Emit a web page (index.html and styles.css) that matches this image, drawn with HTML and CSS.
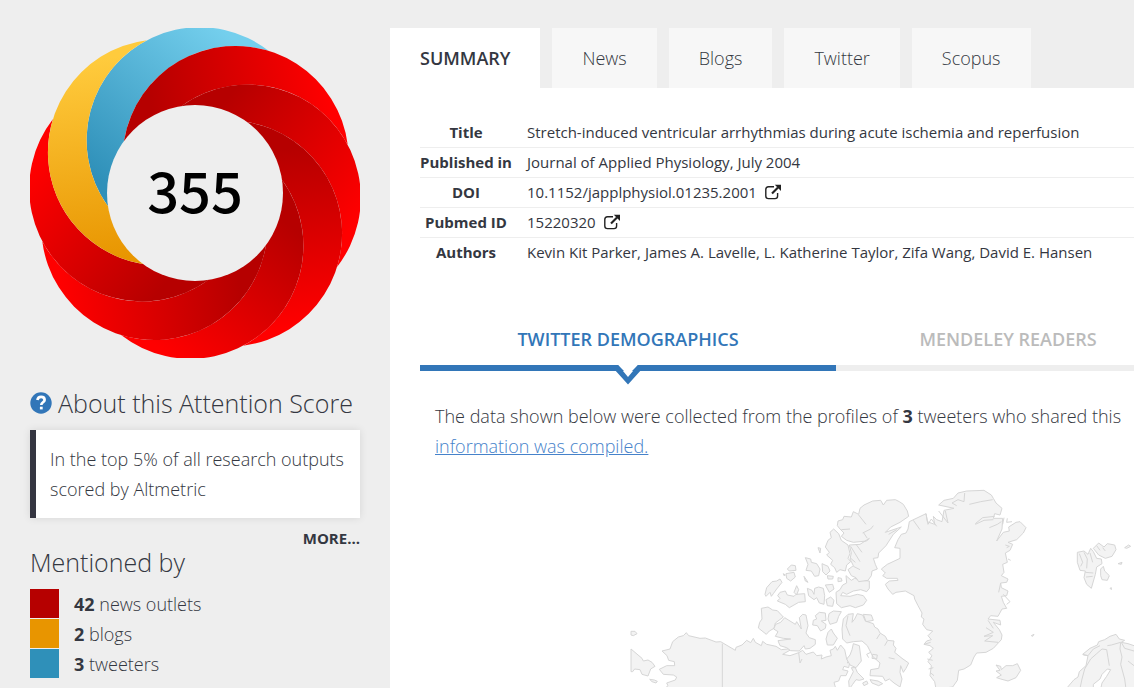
FILE: index.html
```html
<!DOCTYPE html>
<html lang="en">
    <head>
        <meta charset="UTF-8" />
        <meta name="viewport" content="width=device-width, initial-scale=1.0" />
        <title>Altmetric - Stretch-induced ventricular arrhythmias</title>
        <link rel="stylesheet" href="styles.css">
    </head>
    <body>
        <div class="page">
            <aside class="sidebar">
                <svg class="donut" viewBox="-165 -165 330 330" role="img" aria-label="Attention score 355">
                    <defs>
                        <linearGradient id="red" gradientUnits="userSpaceOnUse" x1="-75" y1="-10" x2="20" y2="-160">
                            <stop offset="0" stop-color="#b60000" />
                            <stop offset="1" stop-color="#ff0000" />
                        </linearGradient>
                        <linearGradient id="yellow" gradientUnits="userSpaceOnUse" x1="-90" y1="10" x2="20" y2="-160">
                            <stop offset="0" stop-color="#e89500" />
                            <stop offset="1" stop-color="#ffcb3d" />
                        </linearGradient>
                        <linearGradient id="blue" gradientUnits="userSpaceOnUse" x1="-90" y1="0" x2="20" y2="-160">
                            <stop offset="0" stop-color="#2f90b9" />
                            <stop offset="1" stop-color="#74cfed" />
                        </linearGradient>
                        <path id="petal" d="M61.28 -147.94A113 113 0 1 0 -23.8 57.46A113 113 0 0 1 61.28 -147.94Z" />
                    </defs>
                    <g transform="rotate(5)">
                        <use href="#petal" fill="url(#blue)" />
                        <use href="#petal" fill="url(#red)" transform="rotate(45)" />
                        <use href="#petal" fill="url(#red)" transform="rotate(90)" />
                        <use href="#petal" fill="url(#red)" transform="rotate(135)" />
                        <use href="#petal" fill="url(#red)" transform="rotate(180)" />
                        <use href="#petal" fill="url(#red)" transform="rotate(225)" />
                        <use href="#petal" fill="url(#red)" transform="rotate(270)" />
                        <use href="#petal" fill="url(#yellow)" transform="rotate(315)" />
                    </g>
                    <circle r="88" fill="#eeeeee" />
                    <text class="score" y="20" text-anchor="middle">355</text>
                </svg>

                <h2 class="about">
                    <svg class="help" viewBox="0 0 22 22" aria-hidden="true">
                        <circle cx="11" cy="11" r="10.7" fill="#3276b8" />
                        <path d="M7.4 8.1C7.8 5.9 9.2 4.9 11.1 4.9C13.3 4.9 14.6 6.2 14.6 8C14.6 10.3 11.3 10.3 11.3 13" fill="none" stroke="#fff" stroke-width="2.7" />
                        <path d="M9.9 14.7h2.8v2.7h-2.8z" fill="#fff" />
                    </svg>
                    About this Attention Score
                </h2>
                <div class="score-box">In the top 5% of all research outputs scored by Altmetric</div>
                <a class="more" href="#">MORE...</a>

                <h2 class="mentioned">Mentioned by</h2>
                <ul class="mentions">
                    <li class="news"><a href="#"><strong>42</strong> news outlets</a></li>
                    <li class="blogs"><a href="#"><strong>2</strong> blogs</a></li>
                    <li class="tweeters"><a href="#"><strong>3</strong> tweeters</a></li>
                </ul>
            </aside>

            <main class="content">
                <nav class="tabs">
                    <a class="active" href="#">SUMMARY</a>
                    <a href="#">News</a>
                    <a href="#">Blogs</a>
                    <a href="#">Twitter</a>
                    <a href="#">Scopus</a>
                </nav>

                <div class="panel">
                    <table class="details">
                        <tr>
                            <th scope="row">Title</th>
                            <td>Stretch-induced ventricular arrhythmias during acute ischemia and reperfusion</td>
                        </tr>
                        <tr>
                            <th scope="row">Published in</th>
                            <td>Journal of Applied Physiology, July 2004</td>
                        </tr>
                        <tr>
                            <th scope="row">DOI</th>
                            <td>
                                <a href="#">10.1152/japplphysiol.01235.2001
                                    <svg class="ext" viewBox="0 0 16 16" aria-hidden="true">
                                        <path d="M9 2.7H3.5Q.8 2.7 .8 5.4V12Q.8 14.6 3.5 14.6H10Q12.6 14.6 12.6 12V9" fill="none" stroke="#222" stroke-width="1.4" />
                                        <path d="M7 9.5L13 3.5" stroke="#222" stroke-width="2.2" />
                                        <path d="M9.8 .7H16V7z" fill="#222" />
                                    </svg></a>
                            </td>
                        </tr>
                        <tr>
                            <th scope="row">Pubmed ID</th>
                            <td>
                                <a href="#">15220320
                                    <svg class="ext" viewBox="0 0 16 16" aria-hidden="true">
                                        <path d="M9 2.7H3.5Q.8 2.7 .8 5.4V12Q.8 14.6 3.5 14.6H10Q12.6 14.6 12.6 12V9" fill="none" stroke="#222" stroke-width="1.4" />
                                        <path d="M7 9.5L13 3.5" stroke="#222" stroke-width="2.2" />
                                        <path d="M9.8 .7H16V7z" fill="#222" />
                                    </svg></a>
                            </td>
                        </tr>
                        <tr>
                            <th scope="row">Authors</th>
                            <td>Kevin Kit Parker, James A. Lavelle, L. Katherine Taylor, Zifa Wang, David E. Hansen</td>
                        </tr>
                    </table>

                    <div class="subtabs">
                        <a class="active" href="#">TWITTER DEMOGRAPHICS
                            <svg class="arrow" viewBox="0 0 28 20" aria-hidden="true">
                                <path d="M4 0H24L14 10z" fill="#fff" />
                                <path d="M0 0H4L14 12L24 0H28V4L14 19.5L0 4z" fill="#3276b8" />
                            </svg></a>
                        <a href="#">MENDELEY READERS</a>
                    </div>

                    <p class="intro">
                        The data shown below were collected from the profiles of <strong>3</strong> tweeters who shared this<br>
                        <a href="#">information was compiled.</a>
                    </p>

                    <svg class="map" viewBox="30 30 1512 594" role="img" aria-label="World map">
                        <!-- Alaska and northern Canada -->
                        <path d="M33 510L66 538L70 546L84 543L96 550L105 562L92 570L84 591L66 586L60 572L44 570L38 578L33 578zM33 457L45 457L51 464L40 470L33 468zM89 601L103 603L112 607L108 612L96 608z" />
                        <path d="M133 630L144 620L140 612L166 603L170 594L160 588L130 586L118 571L140 560L164 560L163 548L146 544L141 530L126 516L150 510L158 488L175 474L190 470L199 461L206 470L240 478L256 477L288 489L302 488L346 514L348 505L366 498L380 484L392 491L400 478L406 490L424 500L428 487L440 496L468 502L484 512L520 508L488 526L510 530L536 521L548 514L558 526L580 519L590 530L606 528L604 540L618 534L634 530L630 514L640 510L646 502L652 514L662 498L674 512L680 540L690 538L682 552L690 548L686 566L672 562L668 572L684 576L678 590L662 590L656 606L642 610L646 624L640 632z" />
                        <path d="M307 494V630M536 521L540 552L546 540" fill="none" />
                        <path d="M424 388L444 384L458 393L472 395L490 414L466 432L462 448L448 456L439 466L415 447L419 430L426 420z" />
                        <path d="M494 416L482 430L467 436L461 450L474 458L466 472L490 478L512 480L474 485L480 500L500 506L512 515L538 516L552 500L556 510L570 508L586 496L586 482L568 476L558 462L564 440L558 408L548 406L538 416L544 450L530 428L526 436L510 426z" />
                        <!-- Arctic islands -->
                        <path d="M435 346L440 326L456 308L470 306L480 300L486 310L470 330L460 344L454 352L450 340L438 352zM473 350L480 340L496 336L502 348L522 352L528 346L554 344L556 368L536 370L508 386L496 376L472 366L480 358zM522 340L530 320L536 332L530 348z" />
                        <path d="M502 270L514 258L526 260L528 274L508 276zM498 284L522 280L526 294L512 306L500 298zM490 284L496 288L492 290zM556 236L572 240L574 250L590 254L600 270L596 290L584 292L574 276L558 274L564 256zM606 254L624 262L630 276L618 288L608 278zM594 206L602 208L600 222zM552 292L564 310L556 306zM622 290L640 292L638 300L624 300zM654 296L664 298L666 306L654 308z" />
                        <path d="M562 328L576 334L582 346L584 328L596 324L610 328L614 350L612 376L598 372L590 356L582 362L566 350zM616 318L638 316L642 330L628 340zM618 362L632 354L642 364L638 382L622 380zM586 410L598 400L616 402L618 424L604 426L618 436L616 448L602 456L592 440L578 438L580 424L590 420zM627 404L640 396L664 398L656 412L650 430L630 436L624 420zM624 460L634 450L640 462L652 478L640 498L622 498L618 480z" />
                        <path d="M648 340L660 332L668 318L680 312L678 290L694 304L704 298L724 304L748 306L748 328L740 338L722 332L700 336L680 346L668 340L662 350L690 352L712 346L730 350L740 364L730 378L706 386L690 380L664 386L650 374z" />
                        <path d="M641 150L656 164L664 184L684 198L690 224L684 238L692 248L680 258L676 276L660 272L650 280L644 266L632 256L638 244L620 228L628 220L616 204L624 184L634 176L630 160z" />
                        <path d="M652 140L654 126L668 122L672 112L694 114L700 98L716 106L720 88L732 78L758 66L782 64L790 78L800 64L826 62L838 68L850 76L862 96L866 112L840 130L812 144L796 160L844 144L820 166L798 200L776 222L774 236L760 238L766 256L772 270L756 276L754 290L744 304L716 308L708 296L694 290L684 272L700 260L690 240L694 222L688 198L720 196L748 178L740 186L720 188L700 190L680 184L664 172L672 162L660 150z" />
                        <path d="M692 202L720 248M708 196L726 220M716 108L738 136M728 162L752 150L760 140M690 236L706 250M742 178L730 160M690 150L664 152M806 166L830 152M700 262L720 272" fill="none" />
                        <!-- Baffin -->
                        <path d="M666 450L670 420L684 406L700 404L696 430L704 420L712 404L728 408L736 426L760 434L764 444L774 450L780 462L796 472L802 484L822 486L820 498L828 508L824 520L846 538L866 552L858 568L850 580L842 560L840 580L846 600L840 624L822 612L808 600L796 606L788 592L750 590L752 572L776 568L780 552L758 532L742 500L726 486L700 488L680 492L668 480zM730 406L754 408L760 424L738 428zM688 630L686 606L700 578L694 566L706 566L712 580L732 600L718 604L708 602L698 616zM700 494L718 500L724 546L708 566L690 558L680 540L690 528L696 512zM758 526L772 528L770 540L756 538z" />
                        <path d="M728 612L740 606L744 614L732 620zM750 602L774 606L788 614L776 620L756 612z" />
                        <path d="M684 410L678 440L690 470M752 520L740 526L746 536M824 540L806 536M802 486L794 500M780 464L770 480" fill="none" />
                        <!-- Greenland -->
                        <path d="M948 630L944 608L930 590L934 560L924 548L936 530L926 520L940 508L930 500L912 496L920 486L934 482L924 470L938 456L920 452L908 436L912 420L904 414L906 402L894 380L884 360L882 350L856 336L828 340L818 346L804 330L796 316L808 306L834 304L832 298L800 298L788 290L796 282L784 270L802 256L840 238L840 208L824 206L834 182L844 166L858 162L864 150L868 128L918 104L922 128L944 136L940 112L950 122L966 128L972 94L1002 88L984 84L956 78L972 64L1000 58L1014 42L1040 36L1092 34L1114 48L1120 58L1128 72L1146 88L1140 108L1124 104L1120 118L1148 118L1146 150L1130 186L1150 160L1168 156L1166 144L1188 130L1200 128L1218 146L1210 162L1190 182L1164 190L1178 196L1170 214L1156 222L1162 250L1148 256L1152 280L1144 290L1164 300L1160 310L1142 312L1144 326L1164 336L1160 350L1144 352L1150 370L1160 388L1146 390L1134 412L1112 410L1104 420L1140 424L1142 438L1120 430L1138 452L1146 468L1144 482L1120 508L1098 520L1070 522L1062 534L1052 558L1032 570L1016 574L1012 604L998 624z" />
                        <path d="M880 124L900 152M918 104L924 136L934 120L950 142M956 96L984 132L976 96M1034 42L1032 68L1014 62L996 72L1010 80M1048 76L1082 68L1118 62M1066 134L1088 116L1124 112M1066 136L1092 124L1120 122M1108 146L1132 136L1144 128M1152 116L1148 136M1162 118L1160 130L1176 128M1156 198L1168 202L1160 206M1164 240L1172 244M1142 312L1136 340M1150 346L1170 368L1160 376M1104 424L1120 448M1098 446L1120 460L1092 472L1118 470L1094 486L1134 490M912 496L932 490M922 540L938 544M926 570L940 566M930 580L942 590" fill="none" />
                        <!-- Iceland, Svalbard and Scandinavia -->
                        <path d="M1128 558L1142 562L1144 572L1158 560L1178 560L1192 554L1202 574L1188 596L1164 606L1142 600L1130 596L1144 588L1128 576L1140 574z" />
                        <path d="M1372 220L1392 216L1404 226L1412 208L1420 218L1430 238L1444 240L1446 254L1430 264L1426 286L1414 328L1400 316L1392 296L1396 276L1380 274L1372 250zM1420 208L1436 192L1452 204L1462 194L1484 198L1488 212L1476 232L1456 238L1436 228zM1442 270L1450 262L1454 276L1468 290L1462 304L1446 302L1442 290zM1514 206L1526 198L1532 202L1520 208zM1494 254L1506 250L1504 256zM1470 328L1474 326L1474 332zM1234 470L1242 466L1238 472z" />
                        <path d="M1378 224L1388 250L1382 262M1392 220L1402 240L1400 268M1410 222L1418 250M1396 280L1420 282M1398 294L1418 292M1430 200L1440 214M1448 206L1456 216" fill="none" />
                        <path d="M1338 630L1362 602L1374 594L1378 578L1398 560L1404 530L1388 526L1410 508L1432 498L1436 488L1454 482L1470 472L1488 466L1498 480L1514 484L1504 490L1524 494L1560 506V630z" />
                        <path d="M1380 628L1386 600L1394 570L1412 540L1430 524L1446 510L1460 512L1464 536L1468 560M1462 500L1474 498L1502 490L1500 510L1506 534L1502 556L1514 600L1518 630M1504 490L1514 508L1542 516M1524 546L1542 560M1390 528L1404 530L1420 510L1440 500" fill="none" />
                        <path d="M1420 616L1440 600L1446 586L1462 570L1472 572L1460 592L1446 612L1442 630L1420 630z" fill="#fff" />
                    </svg>
                </div>
            </main>
        </div>
    </body>
</html>
```
FILE: styles.css
```css
* {
    margin: 0;
    padding: 0;
    box-sizing: border-box;
}
body {
    background: #eee;
    color: #343741;
    font-family: 'Open Sans', 'Noto Sans', sans-serif;
    font-size: 18px;
    line-height: 30px;
    min-height: 100vh;
    overflow: hidden;
}
a {
    color: inherit;
    text-decoration: none;
}
strong {
    font-weight: 700;
}
.page {
    display: flex;
    gap: 30px;
    padding: 28px 0 0 30px;
    height: 100vh;
}

/* left column */
.sidebar {
    flex: 0 0 330px;
    display: flex;
    flex-direction: column;
}
.donut {
    display: block;
    width: 100%;
}
.score {
    font-family: 'Noto Sans CJK JP', 'Open Sans', sans-serif;
    font-size: 56px;
    font-weight: 500;
}
h2 {
    font-size: 25px;
    font-weight: 300;
    line-height: 32px;
}
.about {
    display: flex;
    align-items: center;
    gap: 6px;
    margin: 29px 0 11px;
    white-space: nowrap;
}
.help {
    flex: none;
    width: 22px;
    height: 22px;
}
.score-box {
    padding: 14px 8px 14px 14px;
    background: #fff;
    border-left: 6px solid #343541;
    box-shadow: 0 0 8px rgba(0, 0, 0, 0.1);
    font-weight: 340;
}
.more {
    align-self: flex-end;
    margin-top: 10px;
    font-size: 15px;
    font-weight: 700;
    line-height: 20px;
}
.mentioned {
    margin-bottom: 13px;
    line-height: 28px;
}
.mentions {
    display: grid;
    gap: 1px;
    list-style: none;
    font-weight: 300;
}
.mentions li {
    height: 29px;
    padding-left: 15px;
    border-left: 29px solid;
}
.mentions .news {
    border-color: #b60000;
}
.mentions .blogs {
    border-color: #e89500;
}
.mentions .tweeters {
    border-color: #2f90b9;
}

/* right column */
.content {
    flex: 1;
    min-width: 0;
    display: flex;
    flex-direction: column;
}
.tabs {
    display: flex;
    gap: 12px;
}
.tabs a {
    padding: 15px 30px;
    background: #f7f7f7;
    font-weight: 340;
}
.tabs .active {
    background: #fff;
    font-weight: 600;
}
.panel {
    flex: 1;
    padding: 30px 0 0 30px;
    background: #fff;
    overflow: hidden;
}
.details {
    width: 100%;
    border-collapse: collapse;
    font-size: 15px;
    line-height: 19px;
    white-space: nowrap;
}
.details tr + tr {
    border-top: 1px solid #eee;
}
.details th {
    width: 92px;
    padding: 5px 0;
    font-weight: 700;
}
.details td {
    padding: 5px 0 5px 15px;
}
.ext {
    width: 16px;
    height: 16px;
    margin-left: 4px;
    vertical-align: -2px;
}
.subtabs {
    display: flex;
    margin-top: 57px;
    font-weight: 600;
    text-align: center;
    white-space: nowrap;
}
.subtabs a {
    position: relative;
    flex: 0 0 344px;
    padding-bottom: 11px;
    border-bottom: 6px solid #eee;
    color: #bbb;
}
.subtabs .active {
    flex-basis: 416px;
    border-bottom-color: #3276b8;
    color: #3276b8;
}
.arrow {
    position: absolute;
    left: calc(50% - 14px);
    bottom: -20px;
    width: 28px;
    height: 20px;
}
.intro {
    padding: 30px 0 28px 15px;
    font-weight: 340;
    white-space: nowrap;
}
.intro a {
    color: #4682ca;
    text-decoration: underline;
}
.map {
    display: block;
    width: 504px;
    margin-left: auto;
    fill: #f3f3f3;
    stroke: #d6d6d6;
    stroke-width: 3;
    stroke-linejoin: round;
}
```
